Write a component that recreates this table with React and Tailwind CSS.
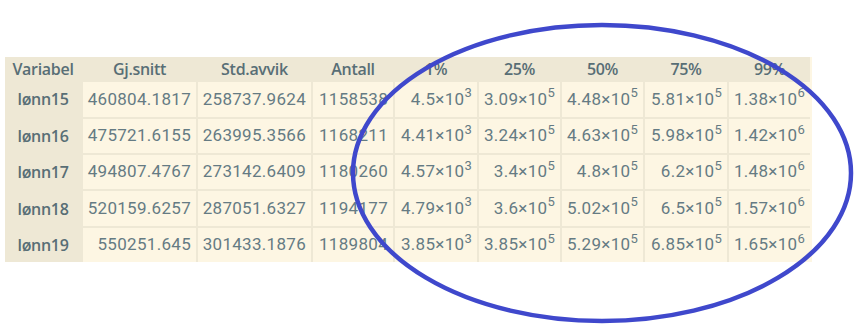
import React from "react";

const rows = [
  ["lønn15", "460804.1817", "258737.9624", "1158538", ["4.5", "3"], ["3.09", "5"], ["4.48", "5"], ["5.81", "5"], ["1.38", "6"]],
  ["lønn16", "475721.6155", "263995.3566", "1168211", ["4.41", "3"], ["3.24", "5"], ["4.63", "5"], ["5.98", "5"], ["1.42", "6"]],
  ["lønn17", "494807.4767", "273142.6409", "1180260", ["4.57", "3"], ["3.4", "5"], ["4.8", "5"], ["6.2", "5"], ["1.48", "6"]],
  ["lønn18", "520159.6257", "287051.6327", "1194177", ["4.79", "3"], ["3.6", "5"], ["5.02", "5"], ["6.5", "5"], ["1.57", "6"]],
  ["lønn19", "550251.645", "301433.1876", "1189804", ["3.85", "3"], ["3.85", "5"], ["5.29", "5"], ["6.85", "5"], ["1.65", "6"]],
];

const headers = ["Variabel", "Gj.snitt", "Std.avvik", "Antall", "1%", "25%", "50%", "75%", "99%"];

function Sci({ v }) {
  return (
    <span>
      {v[0]}×10
      <sup className="text-[13px] relative top-[-1px] align-[0.5em] leading-none">{v[1]}</sup>
    </span>
  );
}

export default function App() {
  return (
    <div className="relative w-[860px] h-[330px] bg-white overflow-hidden" style={{ fontFamily: "Roboto, 'Noto Sans', sans-serif" }}>
      <div className="pt-[57px] pl-[5px]">
        <div className="inline-block bg-[#fdf6e3] pr-[2px]">
          <div className="grid grid-cols-[76px_113px_113px_80px_82px_81px_81px_82px_81px] gap-[2px] bg-[#eee8d5]">
            {headers.map((h) => (
              <div key={h} className="h-[23.3px] flex items-center justify-center text-[16px] font-semibold text-[#586e75] font-['Open_Sans',sans-serif] tracking-[-0.3px]">
                {h}
              </div>
            ))}
            {rows.map((r) => (
              <React.Fragment key={r[0]}>
                <div className="h-[34.35px] flex items-center justify-center text-[16px] font-semibold text-[#586e75] font-['Open_Sans',sans-serif] tracking-[-0.3px]">
                  {r[0]}
                </div>
                {r.slice(1).map((c, i) => (
                  <div
                    key={i}
                    className="h-[34.35px] bg-[#fdf6e3] flex items-center justify-end pr-[5px] text-[17px] tracking-[0.3px] text-[#657b83] whitespace-nowrap"
                  >
                    {Array.isArray(c) ? <Sci v={c} /> : c}
                  </div>
                ))}
              </React.Fragment>
            ))}
          </div>
        </div>
      </div>
      <svg className="absolute left-0 top-0 pointer-events-none" width="860" height="330">
        <ellipse cx="602" cy="173" rx="249" ry="148" fill="none" stroke="#3f48cc" strokeWidth="4.5" />
      </svg>
    </div>
  );
}
